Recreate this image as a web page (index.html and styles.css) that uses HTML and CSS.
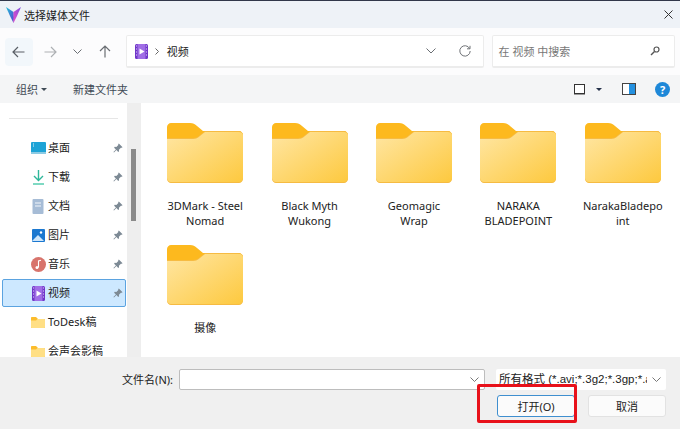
FILE: index.html
```html
<!DOCTYPE html>
<html lang="zh-CN">
<head>
    <meta charset="UTF-8">
    <title>选择媒体文件</title>
    <link rel="stylesheet" href="styles.css">
</head>
<body>
    <svg class="defs" width="0" height="0">
        <defs>
            <linearGradient id="folderFront" x1="0" y1="0" x2="1" y2="1">
                <stop offset="0" stop-color="#ffe6a3"/>
                <stop offset="1" stop-color="#fdc93f"/>
            </linearGradient>
            <linearGradient id="logoLeft" x1="0" y1="0" x2="1" y2="1">
                <stop offset="0" stop-color="#20c4d8"/>
                <stop offset="1" stop-color="#5a3fd0"/>
            </linearGradient>
            <linearGradient id="logoRight" x1="1" y1="0" x2="0" y2="1">
                <stop offset="0" stop-color="#7a4fe0"/>
                <stop offset="1" stop-color="#f04ac8"/>
            </linearGradient>
            <symbol id="folder" viewBox="0 0 76 60">
                <path d="M4 0h19c3 0 5 1 7 3l6 5h36c2 0 4 2 4 4v20H0V4c0-2 2-4 4-4z" fill="#fdb91e"/>
                <path d="M0 15h26c3 0 5-1 7-3l5-4h34c2 0 4 2 4 4v44c0 2-2 4-4 4H4c-2 0-4-2-4-4z" fill="#f6bb42"/>
                <path d="M0 16h26c3 0 5-1 7-3l5-4h34c2 0 4 1 4 3v43c0 2-2 4-4 4H4c-2 0-4-2-4-4z" fill="url(#folderFront)"/>
            </symbol>
            <symbol id="pin" viewBox="0 0 12 12">
                <path d="M7 .5l4.500 4.500-1 .8-1-.2-2.400 2.400.2 1.900-1 .8-2.200-2.200L1.200 11.500 .5 10.800 3.500 7.800 1.300 5.600l.8-1 1.900.2L6.400 2.400 6.200 1.400z" fill="#7d8a95"/>
            </symbol>
            <symbol id="video" viewBox="0 0 13 15">
                <rect width="13" height="15" rx="1.500" fill="#6f35c8"/>
                <rect x="2.500" y="0" width="8" height="15" fill="#a06ee6"/>
                <path d="M4.500 4.500l5 3-5 3z" fill="#fff"/>
                <path d="M1 2h1M1 5h1M1 8h1M1 11h1M11 2h1M11 5h1M11 8h1M11 11h1" stroke="#e4d4fa"/>
            </symbol>
            <symbol id="smallFolder" viewBox="0 0 14 11">
                <path d="M1 0h4l2 2h6c.6 0 1 .4 1 1v7c0 .6-.4 1-1 1H1c-.6 0-1-.4-1-1V1c0-.6.4-1 1-1z" fill="#fcbc2b"/>
                <path d="M0 3.500h5L6.500 2H13c.6 0 1 .4 1 1v7c0 .6-.4 1-1 1H1c-.6 0-1-.4-1-1z" fill="#ffdf85"/>
            </symbol>
        </defs>
    </svg>

    <div class="dialog">
        <header class="titlebar">
            <svg class="app-logo" width="15" height="16" viewBox="0 0 15 16">
                <path d="M0 0l7.500 5L8 11l-.5 5-3.500-7z" fill="url(#logoLeft)"/>
                <path d="M15 0L7.500 5v11l3.500-7z" fill="url(#logoRight)"/>
            </svg>
            <span class="title">选择媒体文件</span>
            <svg class="close" width="9" height="9" viewBox="0 0 9 9">
                <path d="M.5.500l8 8M8.500.500l-8 8" stroke="#333" stroke-width="1"/>
            </svg>
        </header>

        <div class="navbar">
            <div class="nav-btn active">
                <svg width="13" height="12" viewBox="0 0 13 12"><path d="M12.500 6H1M6 1L1 6l5 5" fill="none" stroke="#5a5f66" stroke-width="1.200"/></svg>
            </div>
            <div class="nav-btn forward">
                <svg width="13" height="12" viewBox="0 0 13 12"><path d="M.5 6H12M7 1l5 5-5 5" fill="none" stroke="#adb0b3" stroke-width="1.200"/></svg>
            </div>
            <div class="nav-btn narrow">
                <svg width="9" height="5" viewBox="0 0 9 5"><path d="M.5.500l4 4 4-4" fill="none" stroke="#6a6e73" stroke-width="1"/></svg>
            </div>
            <div class="nav-btn">
                <svg width="12" height="13" viewBox="0 0 12 13"><path d="M6 12.500V1M1 6l5-5 5 5" fill="none" stroke="#6a6e73" stroke-width="1.200"/></svg>
            </div>
            <div class="address">
                <svg class="address-icon" width="13" height="15"><use href="#video"/></svg>
                <svg class="crumb" width="4" height="7" viewBox="0 0 4 7"><path d="M.5.500l3 3-3 3" fill="none" stroke="#666"/></svg>
                <span class="address-text">视频</span>
                <svg class="address-chevron" width="10" height="6" viewBox="0 0 10 6"><path d="M.5.500l4.500 4.500 4.500-4.500" fill="none" stroke="#6a6e73"/></svg>
                <svg class="refresh" width="12" height="12" viewBox="0 0 12 12"><path d="M10.600 3.500A5.200 5.200 0 1 0 11.200 6M11 .8v3H8" fill="none" stroke="#6f7276"/></svg>
            </div>
            <div class="search">
                <span class="search-text">在 视频 中搜索</span>
                <svg width="10" height="10" viewBox="0 0 10 10"><circle cx="6.500" cy="3.500" r="2.500" fill="none" stroke="#555" stroke-width="1.200"/><path d="M4.500 5.500L1 9" stroke="#555" stroke-width="1.500"/></svg>
            </div>
        </div>

        <div class="commandbar">
            <span class="command">组织</span>
            <span class="caret"></span>
            <span class="command new-folder">新建文件夹</span>
            <div class="view-tools">
                <span class="view-box"></span>
                <span class="caret dark"></span>
                <span class="pane-box"></span>
                <span class="help">?</span>
            </div>
        </div>

        <div class="main">
            <nav class="sidebar">
                <div class="side-divider"></div>
                <div class="side-row">
                    <svg class="side-icon" width="15" height="12" viewBox="0 0 15 12">
                        <rect width="15" height="12" rx="1" fill="#1ea3d6"/>
                        <rect y="10" width="15" height="2" fill="#8ccbe4"/>
                        <path d="M2 2h1M2 4h1" stroke="#dff3fb"/>
                    </svg>
                    <span class="side-label">桌面</span>
                    <svg class="pin" width="10" height="10"><use href="#pin"/></svg>
                </div>
                <div class="side-row">
                    <svg class="side-icon" width="15" height="15" viewBox="0 0 15 15">
                        <path d="M7.500 0v10M3 6l4.500 4.500L12 6" fill="none" stroke="#2fb79a" stroke-width="1.400"/>
                        <path d="M2 14h11" stroke="#5fd0b5" stroke-width="1.600"/>
                    </svg>
                    <span class="side-label">下载</span>
                    <svg class="pin" width="10" height="10"><use href="#pin"/></svg>
                </div>
                <div class="side-row">
                    <svg class="side-icon" width="15" height="15" viewBox="0 0 15 15">
                        <rect x="1.500" width="11" height="15" rx="1" fill="#a6bcd6"/>
                        <path d="M4 4h6M4 7h6" stroke="#f2f6fb"/>
                    </svg>
                    <span class="side-label">文档</span>
                    <svg class="pin" width="10" height="10"><use href="#pin"/></svg>
                </div>
                <div class="side-row">
                    <svg class="side-icon" width="15" height="13" viewBox="0 0 15 13">
                        <rect width="13" height="13" x="1" rx="1" fill="#1b78d0"/>
                        <path d="M1 12l6-6 6 6z" fill="#cfe6fa"/>
                        <circle cx="10" cy="3.500" r="1.200" fill="#fff"/>
                    </svg>
                    <span class="side-label">图片</span>
                    <svg class="pin" width="10" height="10"><use href="#pin"/></svg>
                </div>
                <div class="side-row">
                    <svg class="side-icon" width="15" height="15" viewBox="0 0 15 15">
                        <circle cx="7.500" cy="7.500" r="7.500" fill="#d8746c"/>
                        <path d="M7.500 10.500V4l2.500-.8" fill="none" stroke="#fff" stroke-width="1.100"/>
                        <circle cx="6" cy="10.500" r="1.500" fill="#fff"/>
                    </svg>
                    <span class="side-label">音乐</span>
                    <svg class="pin" width="10" height="10"><use href="#pin"/></svg>
                </div>
                <div class="side-row selected">
                    <svg class="side-icon video" width="13" height="15"><use href="#video"/></svg>
                    <span class="side-label">视频</span>
                    <svg class="pin" width="10" height="10"><use href="#pin"/></svg>
                </div>
                <div class="side-row">
                    <svg class="side-icon" width="14" height="11"><use href="#smallFolder"/></svg>
                    <span class="side-label">ToDesk稿</span>
                </div>
                <div class="side-row">
                    <svg class="side-icon" width="14" height="11"><use href="#smallFolder"/></svg>
                    <span class="side-label">会声会影稿</span>
                </div>
            </nav>
            <div class="scrollbar"><div class="thumb"></div></div>
            <section class="files">
                <div class="file"><svg class="folder" width="76" height="60"><use href="#folder"/></svg><span class="file-name">3DMark - Steel Nomad</span></div>
                <div class="file"><svg class="folder" width="76" height="60"><use href="#folder"/></svg><span class="file-name">Black Myth Wukong</span></div>
                <div class="file"><svg class="folder" width="76" height="60"><use href="#folder"/></svg><span class="file-name">Geomagic Wrap</span></div>
                <div class="file"><svg class="folder" width="76" height="60"><use href="#folder"/></svg><span class="file-name">NARAKA BLADEPOINT</span></div>
                <div class="file"><svg class="folder" width="76" height="60"><use href="#folder"/></svg><span class="file-name">NarakaBladepoint</span></div>
                <div class="file"><svg class="folder" width="76" height="60"><use href="#folder"/></svg><span class="file-name">摄像</span></div>
            </section>
        </div>

        <footer class="footer">
            <div class="name-row">
                <span class="name-label">文件名(N):</span>
                <div class="name-input">
                    <svg width="9" height="5" viewBox="0 0 9 5"><path d="M.5.500l4 4 4-4" fill="none" stroke="#777"/></svg>
                </div>
                <div class="type-select">
                    <span class="type-text">所有格式 (*.avi;*.3g2;*.3gp;*.a</span>
                    <svg width="9" height="5" viewBox="0 0 9 5"><path d="M.5.500l4 4 4-4" fill="none" stroke="#777"/></svg>
                </div>
            </div>
            <div class="button-row">
                <button class="btn primary">打开(O)</button>
                <button class="btn">取消</button>
            </div>
        </footer>
    </div>

    <div class="highlight"></div>
</body>
</html>
```

FILE: styles.css
```css
* {
    box-sizing: border-box;
}
body {
    margin: 0;
    width: 680px;
    height: 429px;
    overflow: hidden;
    position: relative;
    font-family: "Noto Sans", "Noto Sans CJK SC", sans-serif;
    font-size: 11px;
    color: #222;
    background-color: #f0f0f0;
}
.defs {
    position: absolute;
}
.dialog {
    display: flex;
    flex-direction: column;
    height: 429px;
    border-top: 1px solid #31374a;
}
.titlebar {
    display: flex;
    align-items: center;
    height: 27px;
    padding: 0 7px 0 6px;
    background-color: #eef2f7;
}
.app-logo {
    margin-right: 3px;
}
.title {
    flex: 1;
    font-size: 11px;
}
.navbar {
    display: flex;
    align-items: center;
    height: 47px;
    padding: 0 5px;
    background-color: #fcfcfd;
}
.nav-btn {
    display: flex;
    align-items: center;
    justify-content: center;
    width: 28px;
    height: 28px;
    margin-right: 2px;
    border-radius: 4px;
}
.nav-btn.active {
    background-color: #f2f7fb;
}
.nav-btn.forward {
    margin-left: 2px;
}
.nav-btn.narrow {
    width: 22px;
}
.address {
    display: flex;
    align-items: center;
    width: 359px;
    height: 33px;
    margin-left: 5px;
    padding: 0 8px;
    background-color: #fff;
    border: 1px solid #ececec;
    border-bottom-width: 2px;
    border-radius: 2px;
}
.crumb {
    margin: 0 8px 0 7px;
}
.address-text {
    flex: 1;
}
.address-chevron {
    margin-right: 23px;
}
.refresh {
    margin-right: 4px;
}
.search {
    display: flex;
    align-items: center;
    justify-content: space-between;
    width: 184px;
    height: 33px;
    margin-left: 8px;
    padding: 0 14px 0 6px;
    background-color: #fff;
    border: 1px solid #ececec;
    border-bottom-width: 2px;
    border-radius: 2px;
}
.search-text {
    color: #777;
}
.commandbar {
    display: flex;
    align-items: center;
    height: 28px;
    padding: 0 10px 0 16px;
    background-color: #f4f5f6;
    color: #3f4a55;
}
.caret {
    width: 0;
    height: 0;
    margin-left: 3px;
    border: 3px solid transparent;
    border-top: 3px solid #3f4a55;
    border-bottom: 0;
}
.caret.dark {
    border-top-color: #26324a;
}
.new-folder {
    margin-left: 26px;
}
.view-tools {
    display: flex;
    align-items: center;
    margin-left: auto;
}
.view-box {
    width: 11px;
    height: 10px;
    background-color: #fff;
    border: 1px solid #333;
    box-shadow: 0 1px 0 #999;
}
.view-tools .caret {
    margin-left: 11px;
}
.pane-box {
    width: 14px;
    height: 12px;
    margin-left: 20px;
    border: 1px solid #444;
    background: linear-gradient(90deg, #fff 50%, #2491e0 50%);
}
.help {
    width: 15px;
    height: 15px;
    margin-left: 19px;
    border-radius: 50%;
    background-color: #1e88d8;
    color: #fff;
    font-size: 11px;
    font-weight: bold;
    line-height: 15px;
    text-align: center;
}
.main {
    display: flex;
    height: 254px;
    background-color: #fff;
}
.sidebar {
    width: 127px;
    padding: 15px 1px 0 2px;
    overflow: hidden;
    background-color: #fff;
}
.side-divider {
    height: 1px;
    margin: 0 8px 15px 7px;
    background-color: #e6e6e6;
}
.side-row {
    display: grid;
    grid-template-columns: 17px 1fr 10px;
    align-items: center;
    height: 28px;
    margin-bottom: 1px;
    padding: 0 2px 0 28px;
    border: 1px solid transparent;
}
.side-row.selected {
    background-color: #cde8ff;
    border-color: #5ba3e0;
    border-radius: 2px;
}
.side-icon.video {
    margin-left: 1px;
}
.side-label {
    padding-bottom: 2px;
    line-height: 15px;
    white-space: nowrap;
}
.scrollbar {
    width: 14px;
    padding: 46px 5px 0 4px;
    background-color: #eeeeee;
}
.thumb {
    height: 72px;
    background-color: #8a8a8a;
}
.files {
    flex: 1;
    display: grid;
    grid-template-columns: repeat(5, 104.400px);
    grid-auto-rows: 122px;
    align-content: start;
    padding: 20px 0 0 12px;
}
.file {
    display: flex;
    flex-direction: column;
    align-items: center;
}
.file-name {
    width: 82px;
    margin-top: 15px;
    font-size: 11px;
    line-height: 15px;
    text-align: center;
    overflow-wrap: anywhere;
    color: #222;
}
.footer {
    flex: 1;
    padding: 12px 14px 0 0;
    background-color: #f0f0f0;
}
.name-row {
    display: flex;
    align-items: center;
    justify-content: flex-end;
}
.name-label {
    padding-bottom: 2px;
}
.name-input {
    display: flex;
    align-items: center;
    justify-content: flex-end;
    width: 306px;
    height: 21px;
    margin-left: 6px;
    padding-right: 5px;
    background-color: #fff;
    border: 1px solid #bdbdbd;
    border-radius: 2px;
}
.type-select {
    display: flex;
    align-items: center;
    width: 170px;
    height: 21px;
    margin-left: 11px;
    padding: 0 5px 0 3px;
    background-color: #fff;
    border-radius: 2px;
}
.type-text {
    flex: 1;
    overflow: hidden;
    white-space: nowrap;
    font-family: "Liberation Sans", "Noto Sans CJK SC", sans-serif;
    font-size: 11.500px;
    line-height: 15px;
}
.type-select svg {
    flex: none;
    margin-left: 5px;
}
.button-row {
    display: flex;
    justify-content: flex-end;
    gap: 13px;
    margin-top: 5px;
}
.btn {
    width: 78px;
    height: 22px;
    padding: 0;
    font-family: inherit;
    font-size: 11px;
    color: #222;
    background-color: #fbfbfb;
    border: 1px solid #e2e2e2;
    border-radius: 3px;
}
.btn.primary {
    border: 1px solid #3f8fcf;
}
.highlight {
    position: absolute;
    left: 477px;
    top: 384px;
    width: 100px;
    height: 39px;
    border: 3px solid #e8111a;
    border-radius: 2px;
}
```
